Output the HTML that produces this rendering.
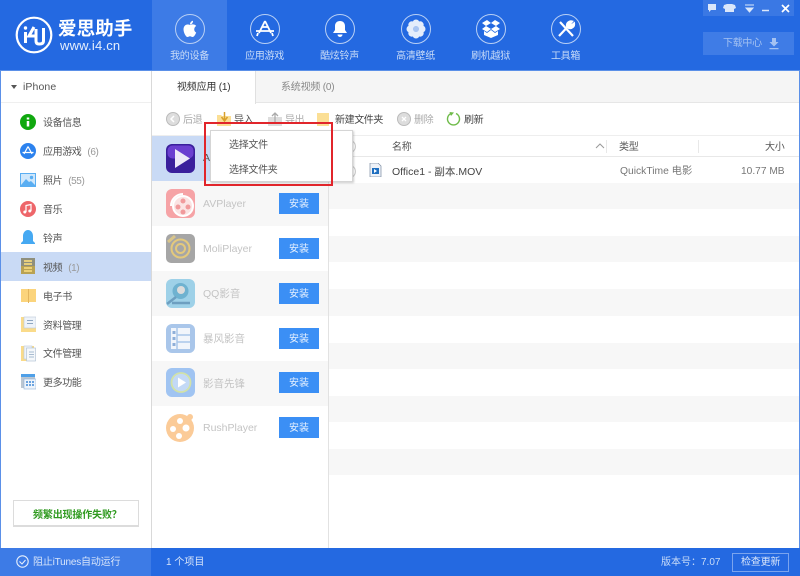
<!DOCTYPE html>
<html lang="zh"><head><meta charset="utf-8"><title>爱思助手</title>
<style>
*{box-sizing:border-box}
html,body{margin:0;padding:0;width:800px;height:576px;overflow:hidden;background:#fff}
body{font-family:"Liberation Sans","Noto Sans CJK SC",sans-serif;font-size:10px;color:#555;position:relative}
#r{position:absolute;left:0;top:0;width:800px;height:576px;overflow:hidden;filter:blur(.3px)}
#r div,#r svg,#r span.a{position:absolute}
.t{white-space:nowrap;line-height:14px}
.nav{color:#c9dcf8;width:75px;text-align:center;top:50px;font-size:10px;line-height:14px;letter-spacing:-.3px}
.ic{top:14px;width:30px;height:30px;border:1px solid #b9d0f5;border-radius:50%}
.g{color:#999}
.btn{left:279px;width:40px;height:21px;background:#3b8ff5;color:#e8f2ff;text-align:center;line-height:23px;font-size:10px}
.ap{left:203px;color:#c4c4c4;font-size:10.5px;line-height:14px;white-space:nowrap}
.side{left:43px;color:#555;line-height:14px;white-space:nowrap;font-size:10px;letter-spacing:-.4px}
.side b{font-weight:normal;color:#999;margin-left:6px}
.tb{color:#aaa;top:114px;line-height:14px;white-space:nowrap;letter-spacing:-.4px}
</style></head><body><div id="r">
<!-- header -->
<div style="left:0;top:0;width:800px;height:70px;background:#2469e1"></div>
<div style="left:152px;top:0;width:75px;height:70px;background:#3d7be6"></div>
<div style="left:0;top:70px;width:800px;height:1px;background:#5b90e8"></div>
<!-- logo -->
<svg style="left:15px;top:16px" width="38" height="38" viewBox="0 0 38 38"><circle cx="19" cy="19" r="17.3" fill="none" stroke="#fff" stroke-width="2.2"/><path d="M10.500 16v11M19 11l-5 9h7M21 13v12q0 3 3 3h1M28.500 12v13q0 3-4 3" fill="none" stroke="#fff" stroke-width="3"/><circle cx="10.500" cy="12" r="1.700" fill="#fff"/></svg>
<div class="t" style="left:58px;top:17px;color:#fff;font-size:18.5px;line-height:24px;font-weight:bold;letter-spacing:.1px">爱思助手</div>
<div class="t" style="left:60px;top:38px;color:#e6effc;font-size:13px;line-height:16px;letter-spacing:.2px">www.i4.cn</div>
<!-- nav -->
<div class="ic" style="left:175px"></div>
<svg style="left:182px;top:20px" width="16" height="18" viewBox="0 0 16 18"><path d="M8 5C6 4 2 4 1.500 9c0 4 2.500 8 4 8 1 0 1.500-.7 2.500-.7s1.500.7 2.500.7c1.500 0 3-2.500 3.700-4.500-2.500-1-2.700-5 0-6.500C13 4 10 4 8 5zM8 4.500C8 2.500 9.500 1 11 .8 11.200 2.800 9.800 4.500 8 4.500z" fill="#fff"/></svg>
<div class="nav" style="left:152px">我的设备</div>
<div class="ic" style="left:250px"></div>
<svg style="left:254px;top:18px" width="22" height="22" viewBox="0 0 22 22"><path d="M11 3 5 15M11 3l6 12M2 13h18M8 9h6M4 15l-1 3M18 15l1 3" stroke="#fff" stroke-width="1.800" fill="none"/></svg>
<div class="nav" style="left:227px">应用游戏</div>
<div class="ic" style="left:325px"></div>
<svg style="left:332px;top:20px" width="16" height="18" viewBox="0 0 16 18"><path d="M8 1c-3 0-5 2-5 5v4l-2 3h14l-2-3V6c0-3-2-5-5-5zM5.500 14.500a2.500 2.500 0 0 0 5 0z" fill="#fff"/></svg>
<div class="nav" style="left:302px">酷炫铃声</div>
<div class="ic" style="left:401px"></div>
<svg style="left:405px;top:18px" width="22" height="22" viewBox="0 0 22 22"><g fill="#e4edfb"><circle cx="11" cy="5" r="3.500"/><circle cx="11" cy="17" r="3.500"/><circle cx="5" cy="11" r="3.500"/><circle cx="17" cy="11" r="3.500"/><circle cx="6.800" cy="6.800" r="3.500"/><circle cx="15.200" cy="6.800" r="3.500"/><circle cx="6.800" cy="15.200" r="3.500"/><circle cx="15.200" cy="15.200" r="3.500"/></g><circle cx="11" cy="11" r="3" fill="#a9c5f2"/></svg>
<div class="nav" style="left:378px">高清壁纸</div>
<div class="ic" style="left:476px"></div>
<svg style="left:481px;top:19px" width="20" height="20" viewBox="0 0 20 20"><path d="M10 4 6 1 1 4l4 3-4 3 5 3 4-3 4 3 5-3-4-3 4-3-5-3zM5 7l5 3 5-3-5-3zM3 12v4l7 3 7-3v-4l-3 2-4-3-4 3z" fill="#fff" fill-rule="evenodd"/></svg>
<div class="nav" style="left:453px">刷机越狱</div>
<div class="ic" style="left:551px"></div>
<svg style="left:556px;top:19px" width="20" height="20" viewBox="0 0 20 20"><path d="M4 3 17 17M3 17 11 8.500M16 2.500a4 4 0 0 0-5 4.500l2 2a4 4 0 0 0 5-4.500l-2.500 2-1.500-1.500z" fill="#fff" stroke="#fff" stroke-width="2.200"/></svg>
<div class="nav" style="left:528px">工具箱</div>
<!-- window controls -->
<div style="left:703px;top:0;width:91px;height:16px;background:#3a78e4"></div>
<svg style="left:703px;top:0" width="91" height="16" viewBox="0 0 91 16"><path d="M5 4h8v6H8l-2 2v-2H5z" fill="#dbe7fa"/><path d="M21 5l3-1h5l3 1 1 3-2 1v3h-9V9l-2-1z" fill="#dbe7fa"/><path d="M42 5h9M43 8h7l-3.500 4z" stroke="#dbe7fa" fill="#dbe7fa" stroke-width="1"/><path d="M59 10.500h7" stroke="#dbe7fa" stroke-width="1.500"/><path d="M79 5l7 7m0-7-7 7" stroke="#fff" stroke-width="1.700"/></svg>
<div style="left:703px;top:32px;width:91px;height:23px;background:#3f7ce6"></div>
<div class="t" style="left:723px;top:37px;color:#a4c2f2;font-size:10px;letter-spacing:-.3px">下载中心</div>
<svg style="left:768px;top:37px" width="12" height="13" viewBox="0 0 12 13"><path d="M4 1h4v4h2.500L6 9.500 1.500 5H4zM1.500 11h9v1.200h-9z" fill="#a4c2f2"/></svg>
<!-- borders -->
<div style="left:0;top:71px;width:1px;height:477px;background:#5b90e8"></div>
<div style="left:799px;top:71px;width:1px;height:477px;background:#5b90e8"></div>
<!-- sidebar -->
<div style="left:151px;top:71px;width:1px;height:477px;background:#d9d9d9"></div>
<div style="left:1px;top:102px;width:150px;height:1px;background:#efefef"></div>
<svg style="left:11px;top:84px" width="7" height="6"><path d="M0 1h6L3 5z" fill="#555"/></svg>
<div class="side" style="left:23px;top:80px;font-size:10.500px;letter-spacing:.1px">iPhone</div>
<div style="left:1px;top:252px;width:150px;height:29px;background:#c9daf5"></div>
<svg style="left:20px;top:114px" width="16" height="16"><circle cx="8" cy="8" r="8" fill="#10a80f"/><path d="M8 3.500v2M8 7v5.500" stroke="#fff" stroke-width="2.500"/></svg>
<div class="side" style="top:117px">设备信息</div>
<svg style="left:20px;top:143px" width="16" height="16"><circle cx="8" cy="8" r="8" fill="#2c82ee"/><path d="M8 3.500 4 11M8 3.500l4 7.500M2.500 9.500h11" stroke="#fff" stroke-width="1.200" fill="none"/></svg>
<div class="side" style="top:146px">应用游戏<b>(6)</b></div>
<svg style="left:20px;top:173px" width="16" height="14"><rect width="16" height="14" fill="#5aaef2"/><rect x="1" y="1" width="14" height="11" fill="#cfe7fb"/><path d="M1 12 6 6l3 3 2-1 4 4z" fill="#5aaef2"/><circle cx="11.500" cy="4.500" r="1.700" fill="#5aaef2"/></svg>
<div class="side" style="top:175px">照片<b>(55)</b></div>
<svg style="left:20px;top:201px" width="16" height="16"><circle cx="8" cy="8" r="8" fill="#ee666a"/><path d="M6 11V4.500l5-1V10" stroke="#fff" stroke-width="1.200" fill="none"/><circle cx="4.800" cy="11" r="1.500" fill="#fff"/><circle cx="9.800" cy="10" r="1.500" fill="#fff"/></svg>
<div class="side" style="top:204px">音乐</div>
<svg style="left:20px;top:230px" width="16" height="16"><path d="M8 0c-3 0-5 3-5 6v5l-2 2v1h14v-1l-2-2V6c0-3-2-6-5-6z" fill="#46a9f2"/></svg>
<div class="side" style="top:233px">铃声</div>
<svg style="left:21px;top:258px" width="14" height="16"><rect width="14" height="16" fill="#b9a253"/><rect x="0" y="0" width="14" height="8" fill="#8f8f7c"/><path d="M3 3h8M3 6h8M3 10h8M3 13h8" stroke="#f3d77c" stroke-width="1.800"/></svg>
<div class="side" style="top:262px">视频<b>(1)</b></div>
<svg style="left:21px;top:288px" width="15" height="16"><path d="M0 1h7v13H0zM8 1h7v13H8z" fill="#fbd47c"/><path d="M7.500 1v14" stroke="#e3b55e"/></svg>
<div class="side" style="top:291px">电子书</div>
<svg style="left:21px;top:316px" width="15" height="17"><rect y="1" width="15" height="15" fill="#fadb8a"/><rect x="3" y="1" width="12" height="11" fill="#eef3f9" stroke="#bcc9d8" stroke-width=".6"/><path d="M6 4.500h6M6 7.500h6" stroke="#8fa7c2"/></svg>
<div class="side" style="top:320px">资料管理</div>
<svg style="left:21px;top:345px" width="15" height="17"><rect y="1" width="13" height="15" fill="#fadb8a"/><rect x="3" y="1" width="8" height="13" fill="#eef3f9" stroke="#bcc9d8" stroke-width=".6"/><rect x="5.500" y="3" width="9" height="13" fill="#f5f8fb" stroke="#a9bbcf" stroke-width=".6"/><path d="M8 7h5M8 9.500h5M8 12h5" stroke="#8fa7c2" stroke-width=".8"/></svg>
<div class="side" style="top:348px">文件管理</div>
<svg style="left:21px;top:374px" width="15" height="16"><rect width="14" height="5" fill="#4fa0e8"/><rect x="0" y="3" width="14" height="11" fill="#bcc7d2"/><rect x="3" y="5" width="12" height="10" fill="#eef4fb" stroke="#8fb2d8" stroke-width=".6"/><path d="M5 8h2M8 8h2M11 8h2M5 11h2M8 11h2M11 11h2" stroke="#3f88d8" stroke-width="1.500"/></svg>
<div class="side" style="top:377px">更多功能</div>
<div style="left:13px;top:500px;width:126px;height:27px;border:1px solid #dcdcdc;border-bottom-width:2px;background:#fff"></div>
<div class="t" style="left:33px;top:509px;color:#2f9a1f;font-size:10px;font-weight:bold;letter-spacing:-.15px">频繁出现操作失败？</div>
<!-- tabs -->
<div style="left:152px;top:71px;width:647px;height:32px;background:#f5f5f5;border-bottom:1px solid #e6e6e6"></div>
<div style="left:152px;top:71px;width:104px;height:33px;background:#fff;border-right:1px solid #e0e0e0"></div>
<div class="t" style="left:177px;top:81px;color:#333;font-size:10px;letter-spacing:-.2px">视频应用 (1)</div>
<div class="t" style="left:281px;top:81px;color:#888;font-size:10px;letter-spacing:-.2px">系统视频 (0)</div>
<!-- toolbar -->
<svg style="left:166px;top:112px" width="14" height="14"><circle cx="7" cy="7" r="6.500" fill="#ddd" stroke="#bbb"/><path d="M8 4 5 7l3 3" stroke="#fff" stroke-width="1.500" fill="none"/></svg>
<div class="tb" style="left:183px">后退</div>
<svg style="left:216px;top:112px" width="16" height="15"><path d="M1 3h4l1 1h9v10H1z" fill="#fbdf95"/><path d="M8.500 0v8M5.500 5l3 4 3-4" stroke="#d8a02c" stroke-width="1.500" fill="none"/></svg>
<div class="tb" style="left:234px;color:#555">导入</div>
<svg style="left:267px;top:112px" width="16" height="15"><path d="M1 5h14v9H1z" fill="#ddd"/><path d="M8 10V2M5 4l3-3 3 3" stroke="#aaa" stroke-width="1.300" fill="none"/></svg>
<div class="tb" style="left:285px">导出</div>
<svg style="left:317px;top:112px" width="14" height="14"><path d="M0 1h12v13H0z" fill="#fbdf95"/></svg>
<div class="tb" style="left:335px;color:#444">新建文件夹</div>
<svg style="left:397px;top:112px" width="14" height="14"><circle cx="7" cy="7" r="6.500" fill="#ddd" stroke="#bbb"/><path d="m5 5 4 4m0-4-4 4" stroke="#fff" stroke-width="1.300"/></svg>
<div class="tb" style="left:414px">删除</div>
<svg style="left:446px;top:111px" width="15" height="15"><path d="M5 2.500a6 6 0 1 0 5 0" fill="none" stroke="#6fbb4a" stroke-width="1.400"/><path d="M3.500 1 8 1.500 5 5z" fill="#6fbb4a"/></svg>
<div class="tb" style="left:464px;color:#444">刷新</div>
<div style="left:152px;top:135px;width:647px;height:1px;background:#eee"></div>
<!-- app list -->
<div style="left:152px;top:136px;width:176px;height:45px;background:#c9daf5"></div>
<div style="left:152px;top:181px;width:176px;height:45px;background:#f7f7f7"></div>
<div style="left:152px;top:271px;width:176px;height:45px;background:#f7f7f7"></div>
<div style="left:152px;top:361px;width:176px;height:45px;background:#f7f7f7"></div>
<div style="left:328px;top:136px;width:1px;height:412px;background:#e2e2e2"></div>
<svg style="left:166px;top:144px" width="30" height="29"><rect width="29" height="29" rx="6" fill="#3a1f9c"/><rect x="1.500" y="1.500" width="26" height="13" rx="5" fill="#6b3fd0"/><path d="M9 5v19l15-9.500z" fill="#eeeaf8"/></svg>
<div class="ap" style="top:151px;color:#555">A</div>
<svg style="left:166px;top:189px" width="30" height="29"><rect width="29" height="29" rx="6" fill="#f6a3a6"/><circle cx="17" cy="17" r="11" fill="#fff"/><circle cx="17" cy="17" r="9" fill="#fbe3e3"/><g fill="#f19a9c"><circle cx="17" cy="12" r="2.500"/><circle cx="12" cy="18" r="2.500"/><circle cx="22" cy="18" r="2.500"/><circle cx="17" cy="23" r="2.500"/></g><path d="M5 17A12 12 0 0 1 17 5" stroke="#fff" stroke-width="2" fill="none"/></svg>
<div class="ap" style="top:197px">AVPlayer</div>
<div class="btn" style="top:193px">安装</div>
<svg style="left:166px;top:234px" width="29" height="29"><rect width="29" height="29" rx="5" fill="#a6a6a6"/><circle cx="14.500" cy="14.500" r="9" fill="none" stroke="#e4c97c" stroke-width="2"/><circle cx="14.500" cy="14.500" r="4.500" fill="none" stroke="#e4c97c" stroke-width="2"/><path d="M2 8 9 2" stroke="#d9c58a" stroke-width="3"/></svg>
<div class="ap" style="top:242px">MoliPlayer</div>
<div class="btn" style="top:238px">安装</div>
<svg style="left:166px;top:279px" width="29" height="29"><rect width="29" height="29" rx="6" fill="#9ed1e8"/><circle cx="14.500" cy="12" r="8" fill="#6fb2d0"/><circle cx="15" cy="11" r="4" fill="#dcdcdc"/><path d="M1 25 10 18M6 24h18" stroke="#6d9fc0" stroke-width="2.500"/></svg>
<div class="ap" style="top:287px">QQ影音</div>
<div class="btn" style="top:283px">安装</div>
<svg style="left:166px;top:324px" width="29" height="29"><rect width="29" height="29" rx="6" fill="#a9c6ea"/><rect x="5" y="4" width="19" height="21" fill="#f1f5fb"/><path d="M11 4v21M11 11h13M11 18h13" stroke="#a9c6ea" stroke-width="1.500"/><g fill="#8eaed8"><rect x="6.500" y="7" width="3" height="3"/><rect x="6.500" y="13" width="3" height="3"/><rect x="6.500" y="19" width="3" height="3"/></g></svg>
<div class="ap" style="top:332px">暴风影音</div>
<div class="btn" style="top:328px">安装</div>
<svg style="left:166px;top:368px" width="29" height="29"><rect width="29" height="29" rx="6" fill="#a0c4f2"/><circle cx="15" cy="14.500" r="9.500" fill="#c3d9f6" stroke="#d2e2a8" stroke-width="1.800"/><path d="M12 9.500v10l8-5z" fill="#fff"/></svg>
<div class="ap" style="top:377px">影音先锋</div>
<div class="btn" style="top:372px">安装</div>
<svg style="left:166px;top:413px" width="30" height="29"><circle cx="14" cy="15" r="14" fill="#fbcb98"/><circle cx="24" cy="4" r="3" fill="#fbcb98"/><g fill="#fff"><circle cx="14" cy="8" r="3"/><circle cx="7" cy="16" r="3"/><circle cx="20" cy="15" r="3.500"/><circle cx="13" cy="23" r="3"/></g></svg>
<div class="ap" style="top:421px">RushPlayer</div>
<div class="btn" style="top:417px">安装</div>
<!-- table -->
<div style="left:329px;top:156px;width:470px;height:1px;background:#e8e8e8"></div>
<div class="t" style="left:392px;top:141px;color:#555;letter-spacing:-.2px">名称</div>
<svg style="left:595px;top:143px" width="10" height="6"><path d="M1 5 5 1l4 4" stroke="#999" fill="none"/></svg>
<div style="left:606px;top:140px;width:1px;height:13px;background:#e8e8e8"></div>
<div class="t" style="left:619px;top:141px;color:#555;letter-spacing:-.2px">类型</div>
<div style="left:698px;top:140px;width:1px;height:13px;background:#e8e8e8"></div>
<div class="t" style="left:765px;top:141px;color:#555;letter-spacing:-.2px">大小</div>
<div style="left:343px;top:140px;width:13px;height:13px;border:1px solid #ccc;border-radius:50%"></div>
<div style="left:343px;top:165px;width:13px;height:13px;border:1px solid #ccc;border-radius:50%"></div>
<svg style="left:369px;top:163px" width="13" height="14"><path d="M1 0h8l3 3v11H1z" fill="#eef2f8" stroke="#7a8aa0" stroke-width=".7"/><rect x="3" y="5" width="7" height="6" fill="#1f6fc0"/><path d="M5 6v4l3-2z" fill="#fff"/></svg>
<div class="t" style="left:392px;top:165px;color:#444;font-size:10.500px">Office1 - 副本.MOV</div>
<div class="t" style="left:620px;top:165px;color:#777;font-size:10.300px">QuickTime 电影</div>
<div class="t" style="left:741px;top:165px;color:#777;font-size:10.200px">10.77 MB</div>
<div style="left:329px;top:183px;width:470px;height:26px;background:#f7f7f7"></div>
<div style="left:329px;top:236px;width:470px;height:26px;background:#f7f7f7"></div>
<div style="left:329px;top:289px;width:470px;height:27px;background:#f7f7f7"></div>
<div style="left:329px;top:343px;width:470px;height:26px;background:#f7f7f7"></div>
<div style="left:329px;top:396px;width:470px;height:26px;background:#f7f7f7"></div>
<div style="left:329px;top:449px;width:470px;height:26px;background:#f7f7f7"></div>
<!-- popup -->
<div style="left:210px;top:130px;width:143px;height:52px;background:#fff;border:1px solid #d5d5d5;box-shadow:1px 1px 2px rgba(0,0,0,.2)"></div>
<div class="t" style="left:229px;top:139px;color:#555;letter-spacing:-.3px">选择文件</div>
<div class="t" style="left:229px;top:164px;color:#555;letter-spacing:-.3px">选择文件夹</div>
<div style="left:204px;top:122px;width:129px;height:64px;border:2px solid #e1252b"></div>
<!-- status -->
<div style="left:0;top:548px;width:800px;height:28px;background:#2469e1"></div>
<div style="left:0;top:548px;width:151px;height:28px;background:#3d7be6"></div>
<svg style="left:16px;top:555px" width="13" height="13"><circle cx="6.500" cy="6.500" r="5.700" fill="none" stroke="#e6effc" stroke-width="1.100"/><path d="M3.500 6.500 6 9l3.500-4" stroke="#e6effc" stroke-width="1.100" fill="none"/></svg>
<div class="t" style="left:33px;top:556px;color:#d8e5fa;font-size:10px;letter-spacing:-.2px">阻止iTunes自动运行</div>
<div class="t" style="left:166px;top:556px;color:#d8e5fa;font-size:10px">1 个项目</div>
<div class="t" style="left:661px;top:556px;color:#c9dcf8;font-size:10px">版本号：7.07</div>
<div style="left:732px;top:553px;width:57px;height:19px;border:1px solid #7aa4ee"></div>
<div class="t" style="left:741px;top:556px;color:#d8e5fa;font-size:10px;letter-spacing:-.2px">检查更新</div>
</div></body></html>
